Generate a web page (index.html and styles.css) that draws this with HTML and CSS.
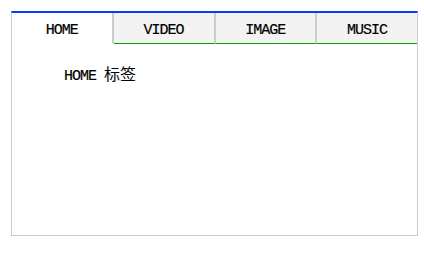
FILE: index.html
```html
<!DOCTYPE html>
<html lang="zh">
<head>
<meta charset="utf-8">
<title>Tabs</title>
<link rel="stylesheet" href="styles.css">
</head>
<body>
<div class="tabs">
  <div class="tab-bar">
    <div class="tab active">HOME</div>
    <div class="tab">VIDEO</div>
    <div class="tab">IMAGE</div>
    <div class="tab">MUSIC</div>
  </div>
  <div class="panel">HOME <span class="cjk">标签</span></div>
</div>
</body>
</html>
```
FILE: styles.css
```css
html, body {
  margin: 0;
  padding: 0;
  background: #ffffff;
}
body {
  padding: 11px 0 0 11px;
  font-family: "Liberation Mono", "Noto Sans CJK SC", monospace;
  color: #000;
}
.tabs {
  box-sizing: border-box;
  width: 407px;
  height: 225px;
  border: 1px solid #cccccc;
  border-top: 2px solid #0a3cf5;
  display: flex;
  flex-direction: column;
}
.tab-bar {
  display: flex;
  height: 31px;
}
.tab {
  flex: 1;
  box-sizing: border-box;
  display: flex;
  align-items: center;
  justify-content: center;
  background: #f3f3f3;
  border-right: 2px solid #cccccc;
  border-bottom: 1px solid #00a000;
  font-size: 15px;
  letter-spacing: -1px;
  -webkit-text-stroke: 0.2px #000;
  padding-top: 4px;
}
.tab:last-child {
  border-right: none;
}
.tab.active {
  background: #ffffff;
  border-bottom-color: #ffffff;
}
.panel {
  padding: 19px 52px;
  font-size: 15px;
  letter-spacing: -1px;
  -webkit-text-stroke: 0.2px #000;
  line-height: 20px;
}
.cjk {
  font-family: "Noto Sans CJK SC", sans-serif;
  font-size: 16px;
  letter-spacing: 0;
  -webkit-text-stroke: 0;
}
```
